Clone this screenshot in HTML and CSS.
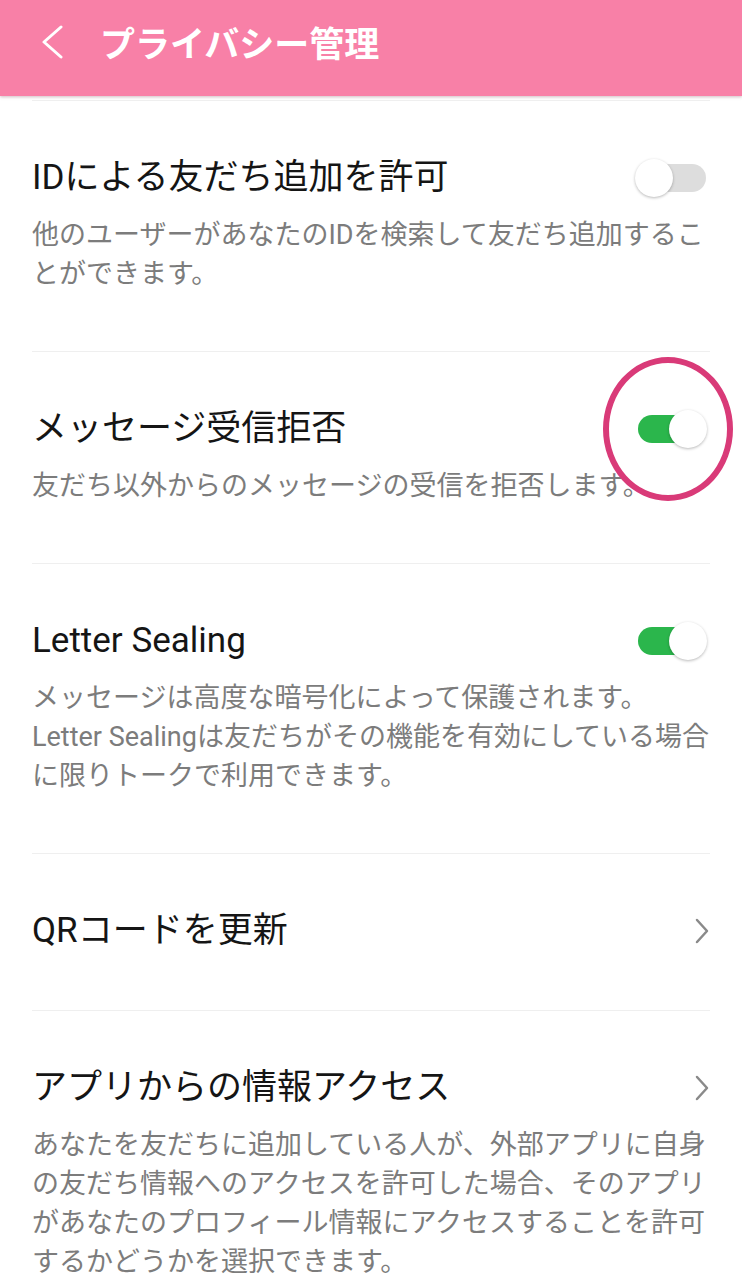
FILE: index.html
```html
<!DOCTYPE html>
<html lang="ja">
<head>
    <meta charset="UTF-8">
    <title>プライバシー管理</title>
    <link rel="stylesheet" href="styles.css">
</head>
<body>
<header class="topbar">
    <a class="back" href="#">
        <svg width="24" height="34" viewBox="0 0 24 34"><path d="M21 2 L4 17 L21 32" fill="none" stroke="#fff" stroke-width="3" stroke-linecap="round" stroke-linejoin="round"/></svg>
    </a>
    <h1 class="topbar-title">プライバシー管理</h1>
</header>
<ul class="settings">
    <li class="setting">
        <div class="setting-head">
            <span class="setting-title">IDによる友だち追加を許可</span>
            <span class="switch"><span class="knob"></span></span>
        </div>
        <p class="setting-desc">他のユーザーがあなたのIDを検索して友だち追加することができます。</p>
    </li>
    <li class="setting">
        <div class="setting-head">
            <span class="setting-title">メッセージ受信拒否</span>
            <span class="switch on"><span class="knob"></span><span class="mark"></span></span>
        </div>
        <p class="setting-desc">友だち以外からのメッセージの受信を拒否します。</p>
    </li>
    <li class="setting">
        <div class="setting-head">
            <span class="setting-title">Letter Sealing</span>
            <span class="switch on"><span class="knob"></span></span>
        </div>
        <p class="setting-desc">メッセージは高度な暗号化によって保護されます。<br>Letter Sealingは友だちがその機能を有効にしている場合に限りトークで利用できます。</p>
    </li>
    <li class="setting">
        <div class="setting-head">
            <span class="setting-title">QRコードを更新</span>
            <svg class="arrow" width="14" height="26" viewBox="0 0 14 26"><path d="M2 2 L12 13 L2 24" fill="none" stroke="#8a8a8a" stroke-width="2.5" stroke-linecap="round" stroke-linejoin="round"/></svg>
        </div>
    </li>
    <li class="setting">
        <div class="setting-head">
            <span class="setting-title">アプリからの情報アクセス</span>
            <svg class="arrow" width="14" height="26" viewBox="0 0 14 26"><path d="M2 2 L12 13 L2 24" fill="none" stroke="#8a8a8a" stroke-width="2.5" stroke-linecap="round" stroke-linejoin="round"/></svg>
        </div>
        <p class="setting-desc">あなたを友だちに追加している人が、外部アプリに自身の友だち情報へのアクセスを許可した場合、そのアプリがあなたのプロフィール情報にアクセスすることを許可するかどうかを選択できます。</p>
    </li>
</ul>
</body>
</html>
```

FILE: styles.css
```css
* {
    padding: 0;
    margin: 0;
    box-sizing: border-box;
}
ul {
    list-style: none;
}
body {
    background-color: #ffffff;
    font-family: Roboto, "Noto Sans CJK JP", sans-serif;
    overflow: hidden;
}
.topbar {
    height: 96px;
    background-color: #f880a7;
    display: flex;
    align-items: center;
    padding: 0 0 12px 40px;
    box-shadow: 0 1px 3px rgba(120, 60, 80, 0.35);
}
.back {
    display: flex;
    width: 24px;
    height: 34px;
}
.topbar-title {
    margin-left: 36px;
    color: #ffffff;
    font-family: "Noto Sans CJK JP", sans-serif;
    font-size: 35px;
    font-weight: 700;
    line-height: 44px;
}
.settings {
    margin-top: 4px;
    padding: 0 32px;
}
.setting {
    border-top: 1px solid #efefef;
    padding: 55px 0 57px;
}
.setting-head {
    display: flex;
    align-items: center;
    justify-content: space-between;
    height: 44px;
}
.setting-title {
    font-size: 35px;
    line-height: 44px;
    color: #151515;
}
.setting-desc {
    margin-top: 16px;
    font-size: 27px;
    line-height: 39px;
    color: #7c7c7c;
}
.switch {
    position: relative;
    width: 68px;
    height: 28px;
    margin-right: 4px;
    border-radius: 14px;
    background-color: #dddddd;
    display: flex;
    align-items: center;
    justify-content: flex-start;
}
.switch .knob {
    width: 38px;
    height: 38px;
    flex-shrink: 0;
    margin-left: -3px;
    border-radius: 50%;
    background-color: #ffffff;
    box-shadow: 0 1px 3px rgba(0, 0, 0, 0.28);
}
.switch.on {
    background-color: #2bb64c;
    justify-content: flex-end;
}
.switch.on .knob {
    margin-left: 0;
    margin-right: -1px;
}
.mark {
    position: absolute;
    left: calc(50% - 4px);
    top: 50%;
    width: 130px;
    height: 144px;
    transform: translate(-50%, -50%);
    border: 6px solid #d93a78;
    border-radius: 50%;
}
.arrow {
    margin-right: 1px;
}
```
